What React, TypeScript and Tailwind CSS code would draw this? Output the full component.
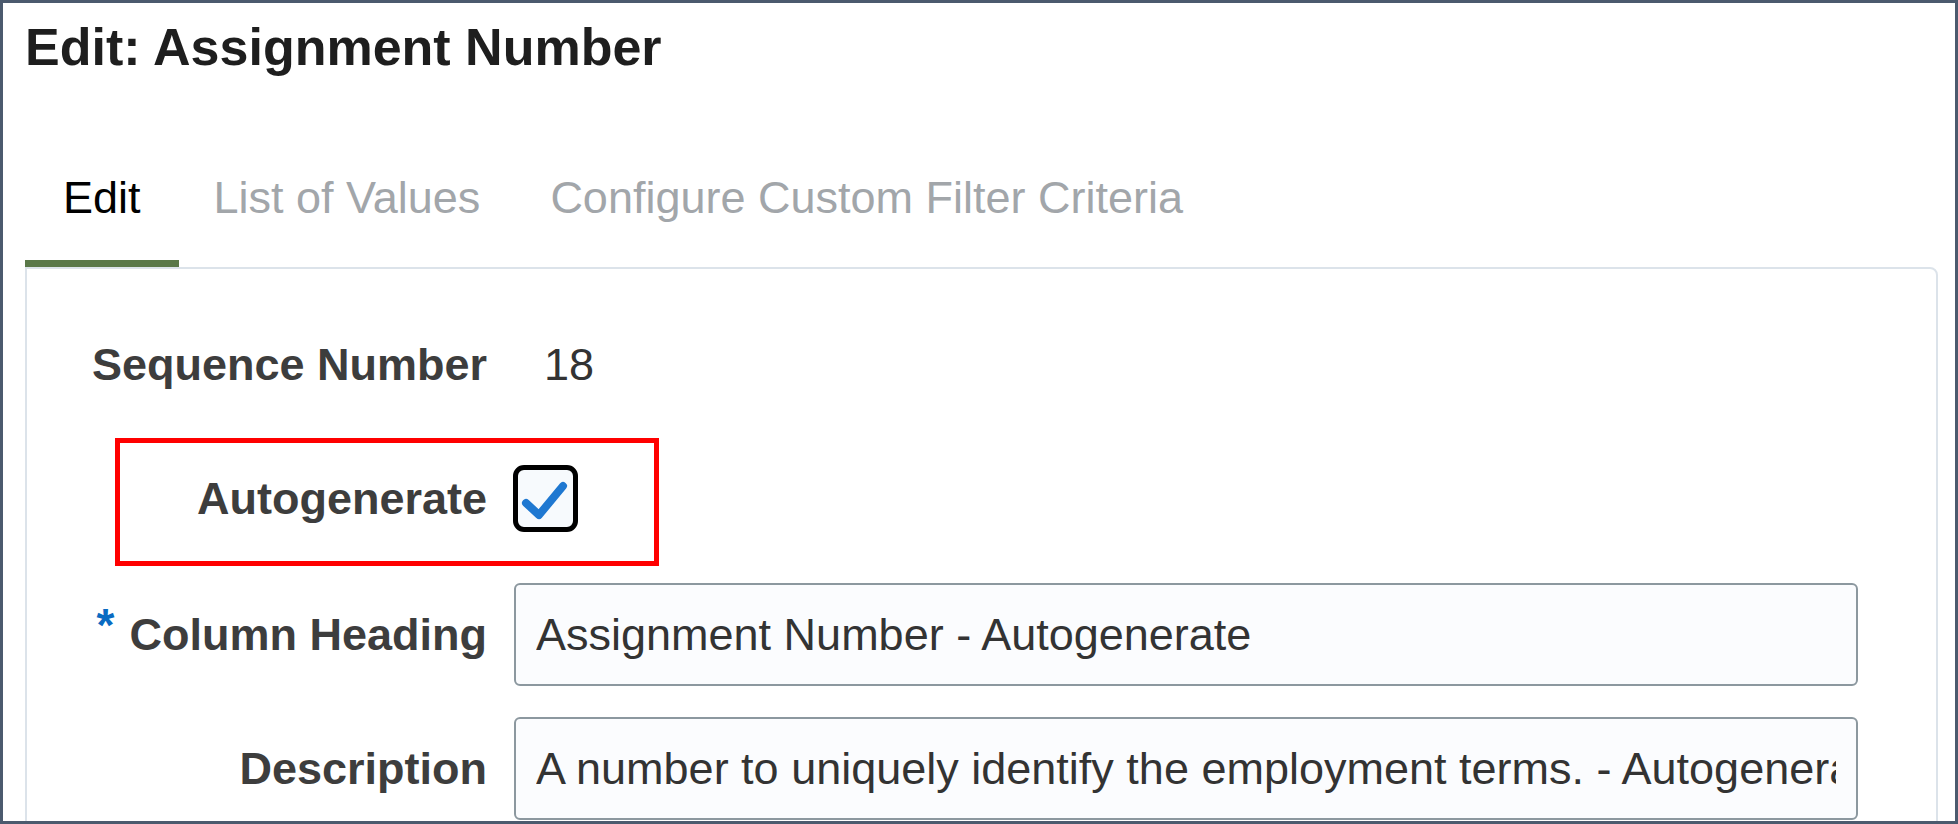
import React from "react"

const tabs = [
  { label: "Edit", active: true },
  { label: "List of Values", active: false },
  { label: "Configure Custom Filter Criteria", active: false },
]

function Label({ children, required }: { children: React.ReactNode; required?: boolean }) {
  return (
    <div className="w-[460px] shrink-0 text-right text-[45px] font-bold leading-[50px] whitespace-nowrap text-[#3d3d3d]">
      {required && (
        <span className="relative -top-[9px] mr-[15px] inline-block text-[46px] text-[#0a6bc2]">*</span>
      )}
      {children}
    </div>
  )
}

function TextBox({ value }: { value: string }) {
  return (
    <div className="flex h-[103px] min-w-0 flex-1 items-center rounded-[6px] border-2 border-[#8c989f] bg-[#fbfcfe] px-[20px]">
      <div className="min-w-0 overflow-hidden whitespace-nowrap text-[45px] leading-[50px] text-[#333333]">{value}</div>
    </div>
  )
}

function CheckBox() {
  return (
    <div className="flex h-[67px] w-[65px] items-center justify-center rounded-[11px] border-[5px] border-black bg-[#f7fafd]">
      <svg width="55" height="57" viewBox="0 0 55 57" fill="none">
        <polyline
          points="8,33 21,45 45,16"
          stroke="#1f78d1"
          strokeWidth="8"
          strokeLinecap="round"
          strokeLinejoin="round"
        />
      </svg>
    </div>
  )
}

export default function App() {
  return (
    <div className="relative h-[824px] w-[1958px] overflow-hidden border-[3px] border-[#4b5a6e] bg-white font-['Liberation_Sans',Arial,sans-serif]">
      <h1 className="pl-[22px] pt-[14px] text-[52px] font-bold leading-[60px] text-[#1e1e1e]">
        Edit: Assignment Number
      </h1>

      <div className="pl-[22px] pr-[17px]">
        <div className="mt-[96px] flex">
          {tabs.map(tab => (
            <div
              key={tab.label}
              className={
                tab.active
                  ? "border-b-[7px] border-[#5a7848] px-[38px] pb-[37px] text-[45px] leading-[50px] text-black"
                  : "border-b-[7px] border-transparent px-[35px] pb-[37px] text-[45px] leading-[50px] text-[#a2a6aa]"
              }
            >
              {tab.label}
            </div>
          ))}
        </div>

        <div className="h-[600px] rounded-tr-[8px] border-2 border-[#dce3ea] pr-[78px] pt-[63px]">
          <div className="flex h-[66px] items-center gap-[27px]">
            <Label>Sequence Number</Label>
            <div className="pl-[30px] text-[45px] leading-[50px] text-[#333333]">18</div>
          </div>

          <div className="mt-[67px] flex h-[67px] items-center gap-[26px]">
            <Label>Autogenerate</Label>
            <CheckBox />
          </div>

          <div className="mt-[51px] flex items-center gap-[27px]">
            <Label required>Column Heading</Label>
            <TextBox value="Assignment Number - Autogenerate" />
          </div>

          <div className="mt-[31px] flex items-center gap-[27px]">
            <Label>Description</Label>
            <TextBox value="A number to uniquely identify the employment terms. - Autogenerate" />
          </div>
        </div>
      </div>

      {/* annotation box drawn over the form */}
      <div className="absolute left-[112px] top-[435px] h-[128px] w-[544px] border-[5px] border-[#ff0000]" />
    </div>
  )
}
